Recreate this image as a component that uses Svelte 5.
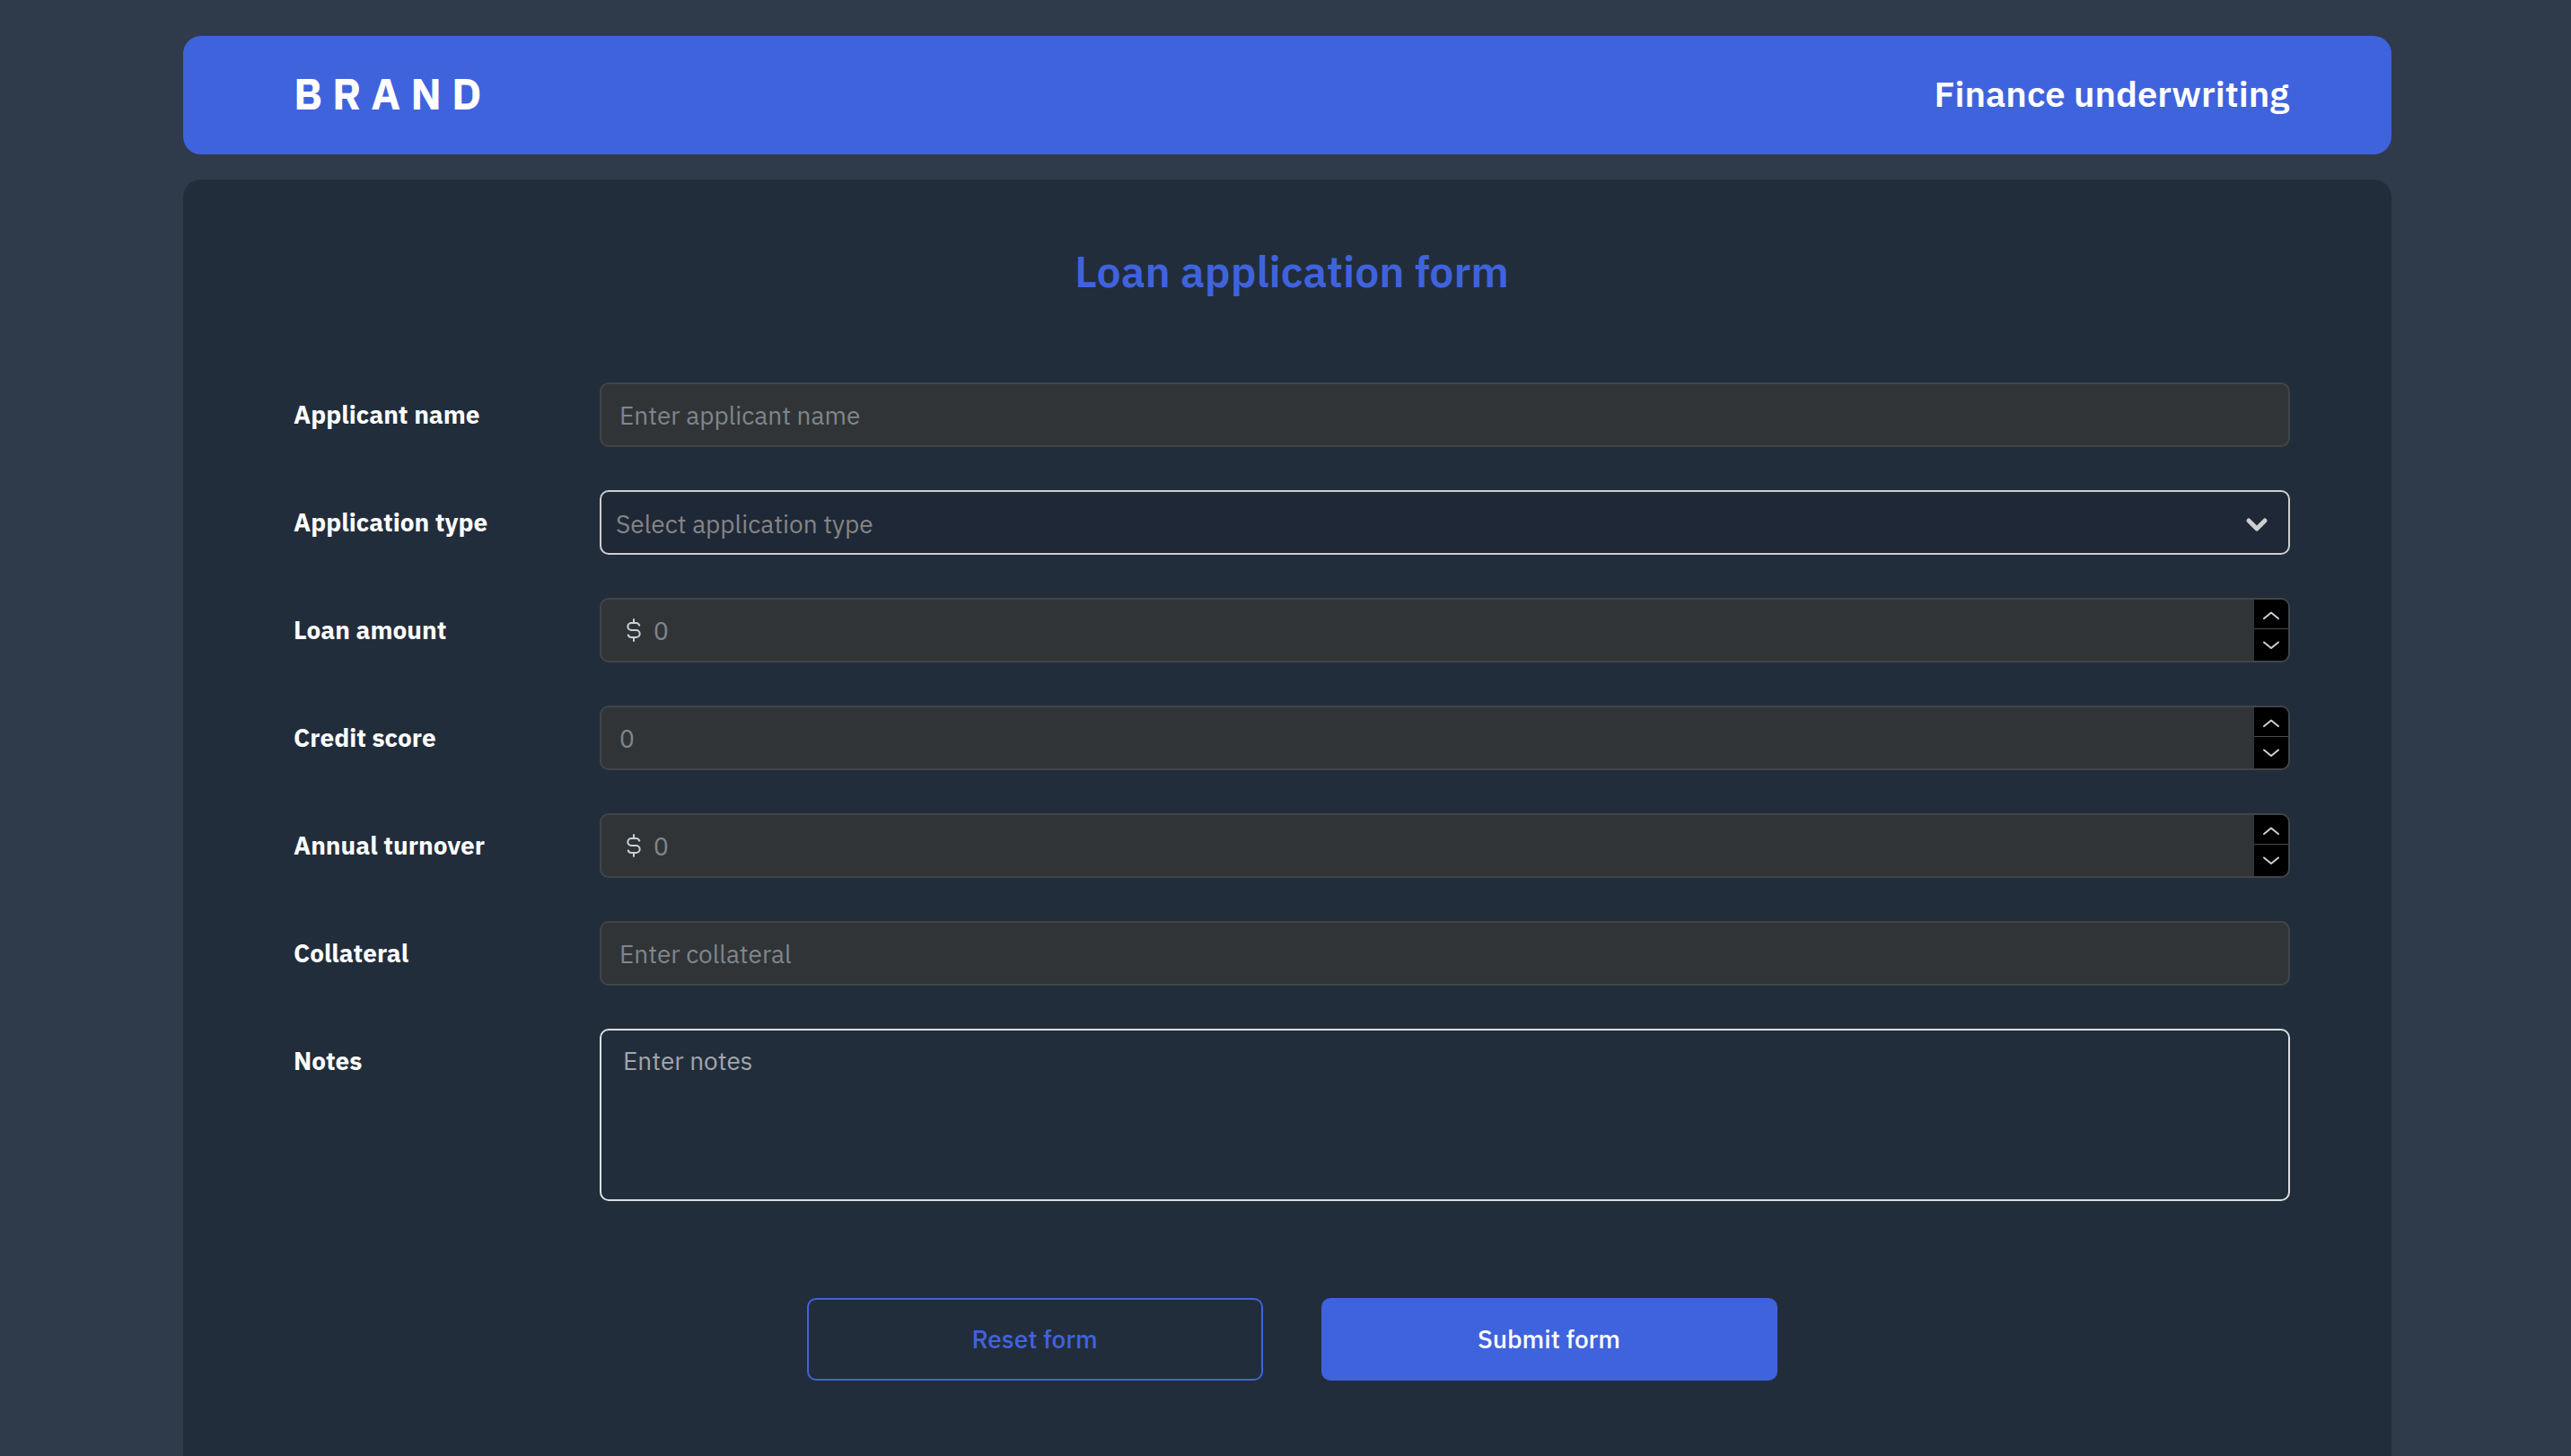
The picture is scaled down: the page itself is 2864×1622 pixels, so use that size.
<script>
  const initial = { applicant: '', type: '', amount: null, score: null, turnover: null, collateral: '', notes: '' };
  let form = $state({ ...initial });

  const types = ['Personal loan', 'Business loan', 'Mortgage'];

  function step(key, delta) {
    form[key] = Math.max(0, (form[key] ?? 0) + delta);
  }

  function reset() {
    form = { ...initial };
  }
</script>

{#snippet numberField(key, label, money)}
  <div class="row">
    <label for={key}>{label}</label>
    <div class="control number">
      {#if money}
        <svg class="dollar" viewBox="0 0 24 24" role="img" aria-label="US dollars">
          <path d="M16.7 8a3 3 0 0 0-2.7-2h-4a3 3 0 0 0 0 6h4a3 3 0 0 1 0 6h-4a3 3 0 0 1-2.7-2M12 3v3m0 12v3" />
        </svg>
      {/if}
      <input id={key} class:money type="number" min="0" placeholder="0" bind:value={form[key]} />
      <div class="stepper">
        <button class="up" type="button" aria-label="Increase {label}" onclick={() => step(key, 1)}>
          <svg viewBox="0 0 20 12"><path d="M2 9l8-6.500 8 6.500" /></svg>
        </button>
        <button class="down" type="button" aria-label="Decrease {label}" onclick={() => step(key, -1)}>
          <svg viewBox="0 0 20 12"><path d="M2 2.500l8 6.500 8-6.500" /></svg>
        </button>
      </div>
    </div>
  </div>
{/snippet}

<div class="page">
  <header>
    <span class="brand">BRAND</span>
    <span class="product">Finance underwriting</span>
  </header>

  <main>
    <h1>Loan application form</h1>
    <form onsubmit={(e) => e.preventDefault()}>
      <div class="row">
        <label for="applicant">Applicant name</label>
        <input id="applicant" class="control text" type="text" placeholder="Enter applicant name" bind:value={form.applicant} />
      </div>

      <div class="row">
        <label for="type">Application type</label>
        <div class="select">
          <select id="type" class="control" bind:value={form.type}>
            <option value="" disabled>Select application type</option>
            {#each types as type}
              <option value={type}>{type}</option>
            {/each}
          </select>
          <svg viewBox="0 0 28 20" aria-hidden="true"><path d="M5 5l9 9 9-9" /></svg>
        </div>
      </div>

      {@render numberField('amount', 'Loan amount', true)}
      {@render numberField('score', 'Credit score', false)}
      {@render numberField('turnover', 'Annual turnover', true)}

      <div class="row">
        <label for="collateral">Collateral</label>
        <input id="collateral" class="control text" type="text" placeholder="Enter collateral" bind:value={form.collateral} />
      </div>

      <div class="row">
        <label for="notes">Notes</label>
        <textarea id="notes" class="control" placeholder="Enter notes" bind:value={form.notes}></textarea>
      </div>

      <div class="actions">
        <button class="reset" type="button" onclick={reset}>Reset form</button>
        <button class="submit" type="submit">Submit form</button>
      </div>
    </form>
  </main>
</div>

<style>
  :global(body) {
    background: #2f3b4b;
  }

  .page,
  .page * {
    box-sizing: border-box;
  }

  .page {
    display: flex;
    flex-direction: column;
    gap: 28px;
    min-height: 100vh;
    padding: 40px 200px 0 204px;
    font-family: 'IBM Plex Sans', Roboto, sans-serif;
    font-size: 28px;
    line-height: 40px;
    color: #fff;
  }

  header {
    display: flex;
    align-items: center;
    justify-content: space-between;
    min-height: 132px;
    padding: 0 114px 4px 123px;
    border-radius: 20px;
    background: #3f63dd;
    font-weight: 600;
  }

  .brand {
    font-size: 48px;
    font-weight: 700;
    letter-spacing: 11px;
  }

  .product {
    font-size: 40px;
  }

  main {
    flex: 1;
    padding: 74px 113px 84px 123px;
    border-radius: 20px 20px 0 0;
    background: #222d3b;
  }

  h1 {
    margin: 0 0 96px;
    font-size: 48px;
    font-weight: 600;
    line-height: 56px;
    text-align: center;
    color: #3f63dd;
  }

  form {
    display: flex;
    flex-direction: column;
    gap: 48px;
  }

  .row {
    display: grid;
    grid-template-columns: 341px 1fr;
    align-items: start;
  }

  label {
    font-weight: 700;
    line-height: 72px;
  }

  input,
  select,
  textarea,
  button {
    margin: 0;
    font: inherit;
    color: #d5d8dc;
  }

  .control {
    width: 100%;
    height: 72px;
    border: 2px solid #414548;
    border-radius: 10px;
    background: #313437;
    outline: none;
  }

  .text {
    padding: 0 20px;
  }

  input::placeholder {
    color: #7e868c;
    opacity: 1;
  }

  .select {
    display: grid;
    align-items: center;
  }

  .select > * {
    grid-area: 1 / 1;
  }

  select {
    appearance: none;
    padding: 4px 72px 0 16px;
    color: #858585;
  }

  select.control {
    border-color: #cecece;
    background: #1f2837;
  }

  .select svg {
    justify-self: end;
    width: 28px;
    height: 20px;
    margin: 6px 23px 0 0;
    pointer-events: none;
  }

  svg {
    display: block;
    fill: none;
    stroke: #c9d1d6;
    stroke-width: 2;
    stroke-linecap: round;
    stroke-linejoin: round;
  }

  .select path {
    stroke: #cecece;
    stroke-width: 5;
  }

  .number {
    display: flex;
    overflow: hidden;
  }

  .number input {
    flex: 1;
    min-width: 0;
    padding: 2px 20px 0;
    border: 0;
    background: none;
    outline: none;
    appearance: textfield;
  }

  .number input.money {
    padding-left: 6px;
  }

  .number input::-webkit-inner-spin-button {
    appearance: none;
    margin: 0;
  }

  .dollar {
    flex: none;
    align-self: center;
    width: 32px;
    height: 32px;
    margin-left: 20px;
    stroke-width: 1.5;
  }

  .stepper {
    display: grid;
    grid-template-rows: 32px 1fr;
    width: 38px;
    background: #000;
  }

  .stepper button {
    display: flex;
    align-items: center;
    justify-content: center;
    padding: 0;
    border: 0;
    background: none;
  }

  .stepper .up {
    padding-top: 4px;
  }

  .stepper .down {
    border-top: 1px solid #4a4a4a;
  }

  .stepper svg {
    width: 20px;
    height: 12px;
  }

  textarea.control {
    display: block;
    height: 192px;
    padding: 14px 24px;
    border-color: #dcdee0;
    background: none;
    resize: none;
  }

  textarea::placeholder {
    color: #a2a6ab;
    opacity: 1;
  }

  .actions {
    display: flex;
    justify-content: center;
    gap: 65px;
    margin-top: 60px;
  }

  .actions button {
    width: 508px;
    height: 92px;
    padding: 0;
    border: 2px solid #3f63dd;
    border-radius: 10px;
    font-weight: 500;
  }

  .actions .reset {
    background: none;
    color: #3f63dd;
  }

  .actions .submit {
    background: #3f63dd;
    color: #fff;
  }
</style>
